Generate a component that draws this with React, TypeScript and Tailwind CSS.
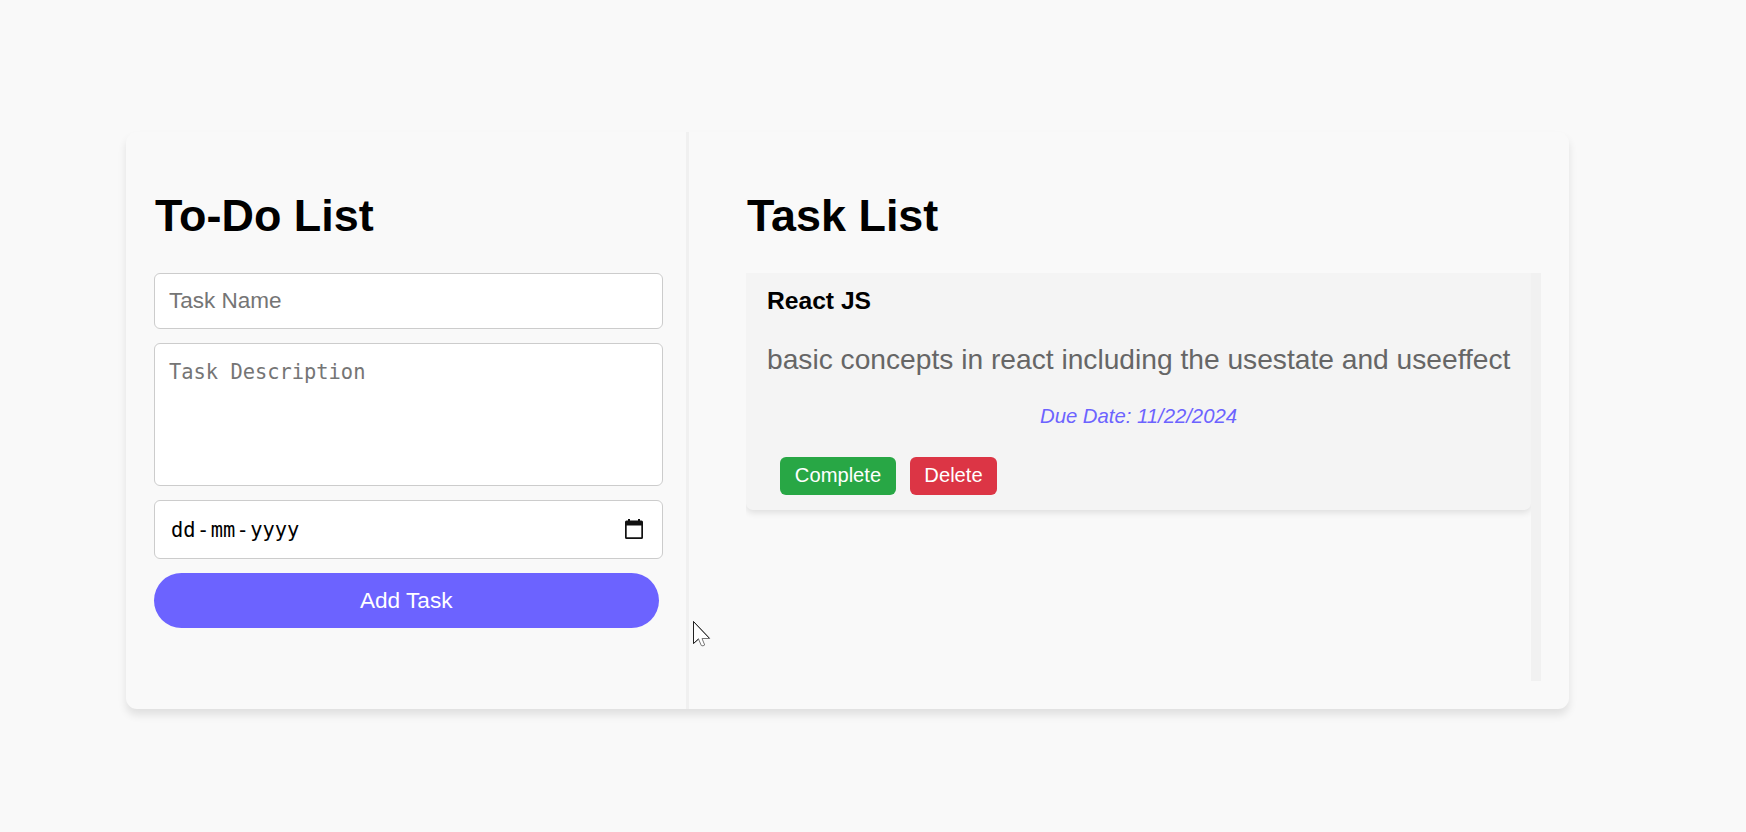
import React from "react";

const fieldBox = "rounded-[6px] border border-[#ccc] bg-white shadow-none outline-none";

function CalendarIcon() {
  return (
    <svg className="mb-px h-[20px] w-[18px]" viewBox="0 0 18 20" aria-hidden="true">
      <path
        fill="#111"
        d="M1.5 1.5H3V0H5V1.5H13V0H15V1.5H16.5Q18 1.5 18 3V18.5Q18 20 16.5 20H1.5Q0 20 0 18.5V3Q0 1.5 1.5 1.5ZM1.7 6.5V18.3H16.3V6.5Z"
      />
    </svg>
  );
}

function Pointer() {
  return (
    <svg
      className="pointer-events-none absolute left-[692px] top-[620px] h-[28px] w-[20px]"
      viewBox="0 0 20 28"
      aria-hidden="true"
    >
      <path
        d="M1.5 1.5V23.5L6.5 19L9.3 25.5Q11 26.5 12.7 25L10 18.5H17.5Z"
        fill="#fff"
        stroke="#777"
        strokeWidth="1"
      />
      <path d="M17.5 18.3L1.5 1.5V23.5L6.5 19" fill="none" stroke="#222" strokeWidth="1" />
    </svg>
  );
}

function TaskForm() {
  return (
    <section className="w-[563px] shrink-0 border-r-[3px] border-[#f0f0f0] pl-7 pt-[57px]">
      <h1 className="pl-px text-[44.9px] font-bold leading-[54px]">To-Do List</h1>
      <form className="mt-[30px] flex flex-col" onSubmit={(e) => e.preventDefault()}>
        <input
          className={`${fieldBox} h-[56px] w-[509px] px-[14px] text-[22.5px] placeholder:text-[#757575]`}
          placeholder="Task Name"
        />
        <textarea
          className={`${fieldBox} mt-[14px] h-[143px] w-[509px] resize-none px-[14px] py-[15px] font-['DejaVu_Sans_Mono',monospace] text-[20.4px] leading-[26px] placeholder:text-[#757575]`}
          placeholder="Task Description"
        />
        <div
          className={`${fieldBox} mt-[14px] flex h-[59px] w-[509px] items-center justify-between pl-[16px] pr-[19px] font-['DejaVu_Sans_Mono',monospace] text-[20.4px]`}
        >
          <div className="flex pt-0.5">
            <span className="pr-[1.4px]">dd</span>
            <span>-</span>
            <span className="px-[1.4px]">mm</span>
            <span>-</span>
            <span className="pl-[1.4px]">yyyy</span>
          </div>
          <CalendarIcon />
        </div>
        <button className="mt-[14px] h-[55px] w-[504.5px] rounded-full bg-[#6c63ff] text-[22.6px] text-white">
          Add Task
        </button>
      </form>
    </section>
  );
}

function TaskCard() {
  return (
    <article className="h-[237px] w-[785px] rounded-b-[7px] bg-[#f4f4f4] px-[21px] pt-[13px] shadow-[0_3px_6px_rgba(0,0,0,0.1)]">
      <h2 className="text-[24.64px] font-bold leading-[30px]">React JS</h2>
      <p className="mt-[27px] whitespace-nowrap text-[28.18px] leading-[32px] text-[#666]">
        basic concepts in react including the usestate and useeffect
      </p>
      <p className="mt-[29px] text-center text-[20.3px] italic leading-[24px] text-[#6c63ff]">
        Due Date: 11/22/2024
      </p>
      <div className="ml-[13px] mt-[29px] flex gap-[14px] text-[20.16px] leading-[24px] text-white">
        <button className="h-[38px] w-[116px] rounded-[6px] bg-[#28a745] pb-[2px]">Complete</button>
        <button className="h-[38px] w-[87px] rounded-[6px] bg-[#dc3545] pb-[2px]">Delete</button>
      </div>
    </article>
  );
}

function TaskList() {
  return (
    <section className="pl-[57px] pt-[57px]">
      <h1 className="pl-px text-[44.9px] font-bold leading-[54px]">Task List</h1>
      <div className="mt-[30px] flex h-[408px] w-[794.5px] overflow-hidden">
        <div className="w-[785px] shrink-0 overflow-hidden">
          <TaskCard />
        </div>
        <div className="w-[9.5px] bg-[#f1f1f1]" />
      </div>
    </section>
  );
}

export default function App() {
  return (
    <div className="relative h-[832px] overflow-hidden bg-[#f9f9f9] pl-[126px] pt-[132px] font-['Liberation_Sans',Arial,sans-serif] text-black">
      <main className="flex h-[577px] w-[1443px] rounded-[11px] bg-[#f9f9f9] shadow-[0_6px_9px_rgba(0,0,0,0.1)]">
        <TaskForm />
        <TaskList />
      </main>
      <Pointer />
    </div>
  );
}
